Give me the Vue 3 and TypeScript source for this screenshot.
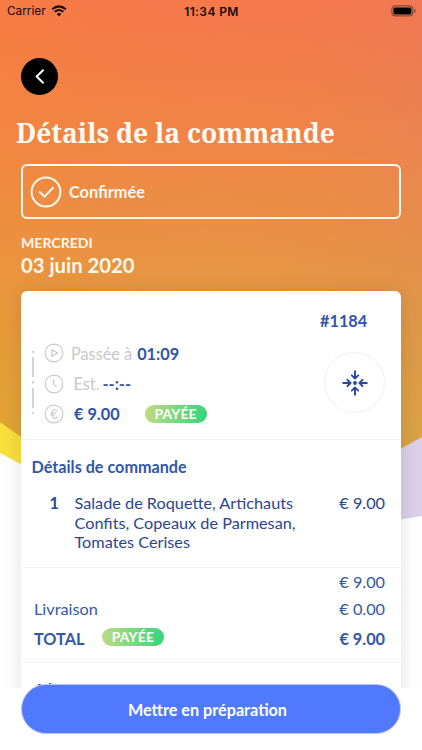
<script setup lang="ts">
interface Line {
  label: string
  amount: string
  paid?: boolean
}

const totals: Line[] = [
  { label: '', amount: '€ 9.00' },
  { label: 'Livraison', amount: '€ 0.00' },
  { label: 'TOTAL', amount: '€ 9.00', paid: true },
]
</script>

<template>
  <div class="screen">
    <svg class="backdrop" width="422" height="750" viewBox="0 0 422 750" aria-hidden="true">
      <defs>
        <linearGradient id="sunset" gradientUnits="userSpaceOnUse" x1="211" y1="0" x2="211" y2="450">
          <stop offset="0" stop-color="#f5784c" />
          <stop offset="0.33" stop-color="#f08647" />
          <stop offset="0.64" stop-color="#e59843" />
          <stop offset="1" stop-color="#dba93a" />
        </linearGradient>
        <linearGradient id="tint" x1="0" y1="0" x2="1" y2="0">
          <stop offset="0" stop-color="#ff8c18" stop-opacity="0.16" />
          <stop offset="0.5" stop-color="#f08030" stop-opacity="0" />
          <stop offset="1" stop-color="#c87888" stop-opacity="0.12" />
        </linearGradient>
      </defs>
      <path d="M0 300H200V560L0 453Z" fill="#fbdf3d" />
      <path d="M422 300H220V545Q340 530 422 516Z" fill="#dccfe9" />
      <path d="M0 0H422V437L401 448.5Q215 560 21 437L0 422Z" fill="url(#sunset)" />
      <path d="M0 0H422V437L401 448.5Q215 560 21 437L0 422Z" fill="url(#tint)" />
    </svg>

    <header class="status">
      <div class="carrier">
        <span>Carrier</span>
        <svg width="16" height="12" viewBox="0 0 16 12" fill="none" stroke="#160b09">
          <path d="M1.2 4.2Q8 -1.6 14.8 4.2" stroke-width="2.1" />
          <path d="M3.7 6.8Q8 3.1 12.3 6.8" stroke-width="2" />
          <path d="M8 11.4L5.7 9Q8 7.2 10.3 9Z" fill="#160b09" stroke="none" />
        </svg>
      </div>
      <span class="time">11:34 PM</span>
      <svg class="battery" width="26" height="12" viewBox="0 0 26 12">
        <rect x="0.9" y="0.9" width="21" height="10" rx="2.8" fill="none" stroke="#000" stroke-opacity="0.5" />
        <rect x="2.4" y="2.4" width="18" height="7" rx="1.4" fill="#000" />
        <path d="M23.3 4V7.8Q24.6 7.2 24.6 5.9Q24.6 4.6 23.3 4Z" fill="#000" fill-opacity="0.5" />
      </svg>
    </header>

    <main class="scroll">
      <button class="back" aria-label="Retour">
        <svg width="37" height="37" viewBox="0 0 37 37" fill="none" stroke="#fff" stroke-width="2" stroke-linecap="round" stroke-linejoin="round">
          <path d="M22 12.3L15.7 18.5L22 24.7" />
        </svg>
      </button>
      <h1>Détails de la commande</h1>

      <div class="state">
        <svg width="32" height="32" viewBox="0 0 32 32" fill="none" stroke="#fff8ee" stroke-width="2" stroke-linecap="round" stroke-linejoin="round">
          <circle cx="16" cy="16" r="14.4" />
          <path d="M9.7 16.1L14.5 20.6L23 11.7" />
        </svg>
        <span>Confirmée</span>
      </div>

      <div class="weekday">MERCREDI</div>
      <div class="date">03 juin 2020</div>

      <section class="card">
        <div class="summary">
          <svg class="rail" width="4" height="66" viewBox="0 0 4 66" fill="none" stroke="#d3d3d3" stroke-width="2">
            <path d="M2 1V3M2 7V27M2 31V33.5M2 38V58M2 62V64" />
          </svg>
          <div class="facts">
            <div class="fact">
              <svg width="20" height="20" viewBox="0 0 20 20" fill="none" stroke="#c9c9c9" stroke-width="1.1" stroke-linejoin="round">
                <circle cx="10" cy="10" r="8.9" />
                <path d="M7.8 6.7L13.6 10L7.8 13.3Z" />
              </svg>
              <span class="muted">Passée à</span>
              <b>01:09</b>
            </div>
            <div class="fact est">
              <svg width="20" height="20" viewBox="0 0 20 20" fill="none" stroke="#c9c9c9" stroke-width="1.1" stroke-linecap="round">
                <circle cx="10" cy="10" r="8.9" />
                <path d="M9.8 5.8V10.6L12.3 12.5" />
              </svg>
              <span class="muted">Est.</span>
              <b>--:--</b>
            </div>
            <div class="fact price">
              <svg width="20" height="20" viewBox="0 0 20 20" fill="none" stroke="#c9c9c9" stroke-width="1.1" stroke-linecap="round">
                <circle cx="10" cy="10" r="8.9" />
                <path d="M13.2 6.8Q12.3 5.8 11 5.8Q8 5.8 8 10Q8 14.2 11 14.2Q12.3 14.2 13.2 13.2M6.6 9H11.6M6.6 11H11.2" />
              </svg>
              <b>€ 9.00</b>
              <span class="badge">PAYÉE</span>
            </div>
          </div>
          <div class="aside">
            <div class="number">#1184</div>
            <div class="locate">
              <svg width="28" height="28" viewBox="0 0 28 28" fill="none" stroke="#27479a" stroke-width="1.9" stroke-linecap="round" stroke-linejoin="round">
                <path d="M14 2.2V9.3M10.8 6.4L14 9.6L17.2 6.4M14 25.8V18.7M10.8 21.6L14 18.4L17.2 21.6M2.2 14H9.3M6.4 10.8L9.6 14L6.4 17.2M25.8 14H18.7M21.6 10.8L18.4 14L21.6 17.2" />
                <circle cx="14" cy="14" r="1.9" fill="#27479a" stroke="none" />
              </svg>
            </div>
          </div>
        </div>

        <div class="items">
          <h2>Détails de commande</h2>
          <div class="item">
            <b>1</b>
            <p>Salade de Roquette, Artichauts Confits, Copeaux de Parmesan, Tomates Cerises</p>
            <span>€ 9.00</span>
          </div>
        </div>

        <div class="totals">
          <div v-for="(line, i) in totals" :key="i" class="line" :class="{ grand: line.paid }">
            <span>{{ line.label }}</span>
            <span v-if="line.paid" class="badge">PAYÉE</span>
            <span class="amount">{{ line.amount }}</span>
          </div>
        </div>

        <div class="extra">Aj</div>
      </section>
    </main>

    <footer class="footer">
      <button class="action">Mettre en préparation</button>
    </footer>
  </div>
</template>

<style>
body {
  margin: 0;
  background: #fff;
}
</style>

<style scoped>
* {
  box-sizing: border-box;
}
.screen {
  position: relative;
  width: 422px;
  height: 750px;
  overflow: hidden;
  background: #fff;
  font-family: Lato, sans-serif;
  color: #2c4c9c;
  display: flex;
  flex-direction: column;
}
.backdrop {
  position: absolute;
  inset: 0;
}
button {
  border: 0;
  padding: 0;
  font-family: inherit;
}
.status {
  position: relative;
  height: 22px;
  flex: none;
  display: grid;
  grid-template-columns: 1fr auto 1fr;
  align-items: center;
  padding: 0 5px 0 7px;
  font-family: Inter, sans-serif;
  font-size: 12px;
  color: #160b09;
}
.carrier {
  display: flex;
  align-items: center;
  gap: 5px;
  font-size: 11.8px;
}
.time {
  font-weight: 600;
  font-size: 12px;
  letter-spacing: 0.4px;
  margin-right: 1px;
}
.battery {
  justify-self: end;
}
.scroll {
  position: relative;
  height: 666px;
  flex: none;
  overflow: hidden;
  padding: 36px 21px 0;
}
.back {
  display: block;
  width: 37px;
  height: 37px;
  border-radius: 50%;
  background: #000;
}
.back svg {
  display: block;
}
h1 {
  margin: 20px 0 0 -5px;
  height: 36px;
  line-height: 36px;
  font-family: 'Noto Serif', 'Droid Serif', 'DejaVu Serif Condensed', 'DejaVu Serif', serif;
  font-size: 26.4px;
  font-weight: 700;
  white-space: nowrap;
  color: #fffaf4;
}
.state {
  margin-top: 13px;
  height: 55px;
  border: 2px solid #fff8ee;
  border-radius: 6px;
  display: flex;
  align-items: center;
  gap: 7px;
  padding-left: 7px;
  font-size: 16.3px;
  font-weight: 700;
  color: #fff8ee;
}
.weekday {
  margin-top: 15px;
  height: 18px;
  line-height: 18px;
  font-size: 14.1px;
  font-weight: 700;
  color: #fff8ee;
}
.date {
  height: 27px;
  line-height: 26px;
  font-size: 20.3px;
  font-weight: 700;
  color: #fff8ee;
}
.card {
  margin-top: 12px;
  height: 460px;
  background: #fff;
  border-radius: 6px;
  box-shadow: 0 2px 20px rgba(0, 0, 0, 0.12);
}
.summary {
  height: 149px;
  border-bottom: 1px solid #f3f3f3;
  display: flex;
}
.rail {
  margin: 59px 0 0 10px;
}
.facts {
  margin: 47px 0 0 9px;
  flex: 1;
}
.fact {
  height: 30.4px;
  display: flex;
  align-items: center;
  font-size: 16.3px;
  white-space: nowrap;
}
.muted {
  margin-left: 7px;
  color: #c8c8c8;
}
.fact b {
  margin-left: 5px;
  color: #2f55a8;
}
.est .muted {
  margin-left: 9.5px;
}
.est b {
  margin-left: 3px;
}
.price b {
  margin-left: 10px;
}
.badge {
  width: 62px;
  height: 18px;
  border-radius: 9px;
  background: linear-gradient(90deg, #bddc82, #35d57c);
  color: #fff;
  font-size: 13.8px;
  line-height: 18px;
  font-weight: 700;
  letter-spacing: 0.2px;
  text-align: center;
}
.price .badge {
  margin-left: 25px;
}
.aside {
  width: 77px;
  padding-top: 20px;
}
.number {
  margin-left: -4px;
  height: 20px;
  line-height: 20px;
  font-size: 16.3px;
  font-weight: 700;
  color: #2f55a8;
}
.locate {
  margin-top: 21px;
  width: 61px;
  height: 61px;
  border: 1px solid #f0f0f0;
  border-radius: 50%;
  display: grid;
  place-items: center;
}
.items {
  height: 128px;
  border-bottom: 1px solid #f3f3f3;
  padding: 16px 16px 0 10.5px;
}
h2 {
  margin: 0;
  height: 22px;
  line-height: 22px;
  font-size: 16.2px;
  font-weight: 700;
  color: #3157aa;
}
.item {
  margin-top: 15px;
  display: flex;
  font-size: 16.25px;
  line-height: 19.5px;
  color: #2a4594;
}
.item b {
  width: 25px;
  margin-left: 18px;
}
.item p {
  margin: 0;
  width: 235px;
}
.item span {
  margin-left: auto;
}
.totals {
  height: 95px;
  border-bottom: 1px solid #f3f3f3;
  padding: 0.5px 16px 0 13px;
}
.line {
  height: 26.5px;
  display: flex;
  align-items: center;
  font-size: 16.25px;
  color: #3358a6;
}
.amount {
  margin-left: auto;
}
.grand {
  height: 33px;
  font-weight: 700;
}
.line .badge {
  margin: -3px 0 0 17.5px;
}
.extra {
  padding: 16.5px 0 0 12.5px;
  font-size: 17px;
  line-height: 20px;
  letter-spacing: 2.5px;
  font-weight: 700;
}
.footer {
  position: relative;
  flex: 1;
  padding: 0 21px;
}
.action {
  display: block;
  width: 380px;
  height: 50px;
  margin-top: -4px;
  padding-right: 7px;
  border: 1px solid #b9c6f5;
  border-radius: 25px;
  background: #5079ff;
  color: #fff;
  font-size: 16.2px;
  font-weight: 700;
}
</style>
